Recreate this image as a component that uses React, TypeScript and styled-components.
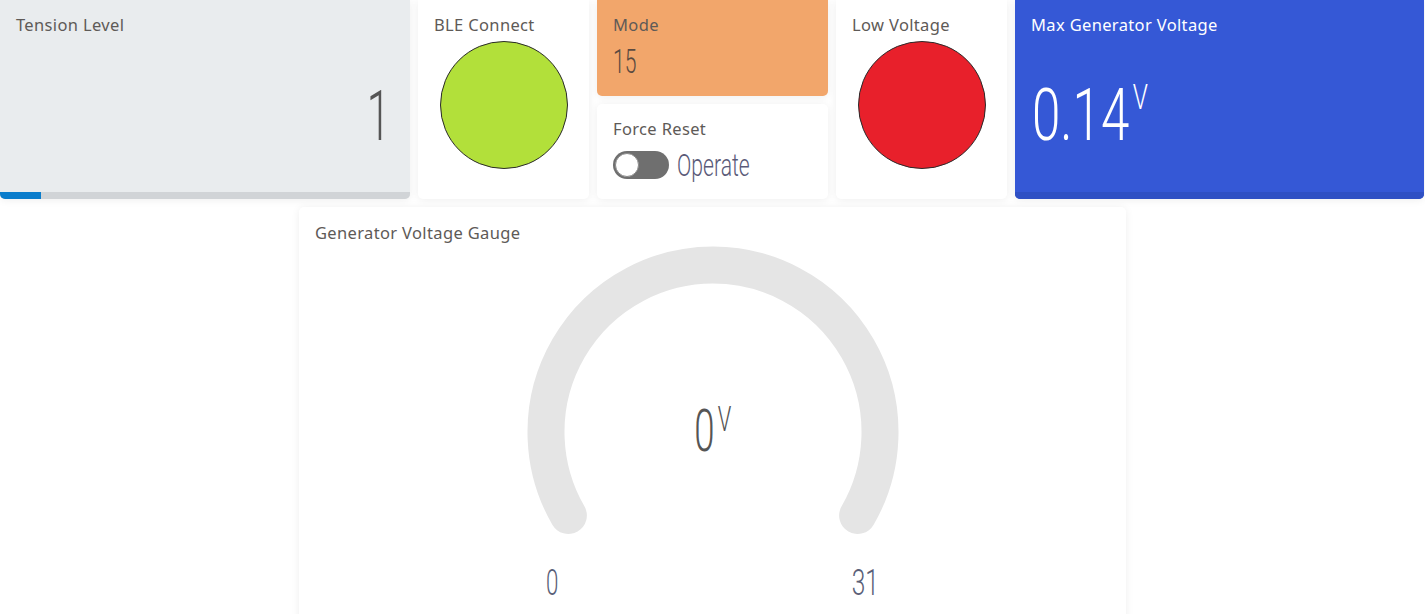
import React from "react";
import styled, { createGlobalStyle } from "styled-components";

const GlobalStyle = createGlobalStyle`
  html, body {
    margin: 0;
    padding: 0;
    background: #ffffff;
    font-family: "Noto Sans", "Open Sans", sans-serif;
    overflow: hidden;
  }
`;

const Page = styled.div`
  width: 1425px;
  height: 614px;
  overflow: hidden;
  display: flex;
  flex-direction: column;
  align-items: center;
  gap: 8px;
`;

const TopRow = styled.div`
  display: grid;
  grid-template-columns: 410px 171px 231px 171px 409px;
  gap: 8px;
  width: 100%;
  height: 199px;
  flex-shrink: 0;
`;

const Card = styled.div<{ $bg?: string }>`
  position: relative;
  display: flex;
  flex-direction: column;
  background: ${({ $bg }) => $bg || "#ffffff"};
  border-radius: 0 0 5px 5px;
  box-shadow: 0 1px 8px rgba(0, 0, 0, 0.07);
  overflow: hidden;
  box-sizing: border-box;
`;

const Stack = styled.div`
  display: flex;
  flex-direction: column;
  gap: 8px;

  & > div {
    flex: 1;
  }
  & > div + div {
    border-radius: 5px;
  }
`;

const Title = styled.div<{ $light?: boolean }>`
  padding: 14px 16px 0;
  font-size: 16.5px;
  letter-spacing: 0.35px;
  line-height: 21px;
  color: ${({ $light }) => ($light ? "#ffffff" : "#5e5a57")};
`;

const Condensed = styled.span<{
  $size: number;
  $sx?: number;
  $origin?: string;
  $color?: string;
}>`
  display: inline-block;
  font-family: Roboto, "Liberation Sans", sans-serif;
  font-weight: 300;
  font-size: ${({ $size }) => $size}px;
  line-height: 1;
  color: ${({ $color }) => $color || "#5a5a5a"};
  transform: scaleX(${({ $sx }) => $sx || 0.6});
  transform-origin: ${({ $origin }) => $origin || "left"} center;
  white-space: nowrap;
`;

const Sup = styled.sup<{ $scale?: number }>`
  font-size: ${({ $scale }) => $scale || 0.48}em;
  vertical-align: top;
  position: relative;
  top: 0.02em;
  margin-left: 0.14em;
  line-height: 1;
`;

const BigValue = styled.div<{ $align?: string }>`
  flex: 1;
  display: flex;
  align-items: center;
  justify-content: ${({ $align }) => $align || "flex-start"};
  padding: 4px 20px 0 17px;
`;

const ProgressTrack = styled.div`
  height: 7px;
  background: #d1d4d7;
`;

const ProgressFill = styled.div`
  height: 100%;
  background: #0a7dcc;
`;

const BlueBand = styled.div`
  height: 7px;
  background: #2f50c4;
`;

const LampWrap = styled.div`
  flex: 1;
  display: flex;
  align-items: flex-start;
  justify-content: center;
  padding-top: 6px;
`;

const Lamp = styled.div<{ $color: string }>`
  width: 128px;
  height: 128px;
  border-radius: 50%;
  background: ${({ $color }) => $color};
  border: 1px solid #2a2a2a;
  box-sizing: border-box;
`;

const ModeValue = styled.div`
  padding: 9px 16px 0;
`;

const SwitchRow = styled.div`
  display: flex;
  align-items: center;
  gap: 8px;
  padding: 10px 16px 0;
`;

const Toggle = styled.div`
  position: relative;
  width: 56px;
  height: 28px;
  border-radius: 14px;
  background: #6f6f6f;
  flex-shrink: 0;
`;

const Knob = styled.div`
  position: absolute;
  top: 2px;
  left: 2px;
  width: 24px;
  height: 24px;
  border-radius: 50%;
  background: #ffffff;
  border: 1px solid #8a8a8a;
  box-sizing: border-box;
`;

const GaugeCard = styled(Card)`
  width: 827px;
  height: 420px;
  border-radius: 5px;
  align-items: center;
  flex-shrink: 0;
`;

const GaugeTitle = styled(Title)`
  align-self: stretch;
  padding-top: 15px;
`;

const GaugeBody = styled.div`
  position: relative;
  width: 380px;
  height: 295px;
  margin-top: -1px;
`;

const GaugeCenter = styled.div`
  position: absolute;
  left: 0;
  right: 0;
  top: 159px;
  display: flex;
  justify-content: center;
`;

const Scale = styled.div`
  width: 333px;
  display: flex;
  justify-content: space-between;
  margin-top: 28px;
`;

const GaugeArc = () => {
  const cx = 190;
  const cy = 190;
  const r = 167;
  const a = (30 * Math.PI) / 180;
  const dx = r * Math.cos(a);
  const dy = r * Math.sin(a);
  return (
    <svg width="380" height="295" viewBox="0 0 380 295">
      <path
        d={`M ${cx - dx} ${cy + dy} A ${r} ${r} 0 1 1 ${cx + dx} ${cy + dy}`}
        fill="none"
        stroke="#e5e5e5"
        strokeWidth="37"
        strokeLinecap="round"
      />
    </svg>
  );
};

const App = () => {
  return (
    <>
      <GlobalStyle />
      <Page>
        <TopRow>
          <Card $bg="#e9ecee">
            <Title>Tension Level</Title>
            <BigValue $align="flex-end">
              <Condensed $size={71} $origin="right" $color="#555">
                1
              </Condensed>
            </BigValue>
            <ProgressTrack>
              <ProgressFill style={{ width: `${(1 / 10) * 100}%` }} />
            </ProgressTrack>
          </Card>

          <Card>
            <Title>BLE Connect</Title>
            <LampWrap>
              <Lamp $color="#b2e03a" />
            </LampWrap>
          </Card>

          <Stack>
            <Card $bg="#f2a66b">
              <Title>Mode</Title>
              <ModeValue>
                <Condensed $size={34} $sx={0.62} $color="#5b4a40">
                  15
                </Condensed>
              </ModeValue>
            </Card>
            <Card>
              <Title>Force Reset</Title>
              <SwitchRow>
                <Toggle>
                  <Knob />
                </Toggle>
                <Condensed $size={32} $sx={0.66} $color="#5a5a78">
                  Operate
                </Condensed>
              </SwitchRow>
            </Card>
          </Stack>

          <Card>
            <Title>Low Voltage</Title>
            <LampWrap>
              <Lamp $color="#e8202b" />
            </LampWrap>
          </Card>

          <Card $bg="#3558d6">
            <Title $light>Max Generator Voltage</Title>
            <BigValue>
              <Condensed $size={73} $sx={0.7} $color="#ffffff">
                0.14
                <Sup>V</Sup>
              </Condensed>
            </BigValue>
            <BlueBand />
          </Card>
        </TopRow>

        <GaugeCard>
          <GaugeTitle>Generator Voltage Gauge</GaugeTitle>
          <GaugeBody>
            <GaugeArc />
            <GaugeCenter>
              <Condensed $size={59} $sx={0.62} $origin="center" $color="#555">
                0<Sup $scale={0.6}>V</Sup>
              </Condensed>
            </GaugeCenter>
          </GaugeBody>
          <Scale>
            <Condensed $size={36} $sx={0.62} $color="#5a5f78">
              0
            </Condensed>
            <Condensed $size={36} $sx={0.68} $origin="right" $color="#5a5f78">
              31
            </Condensed>
          </Scale>
        </GaugeCard>
      </Page>
    </>
  );
};

export default App;
